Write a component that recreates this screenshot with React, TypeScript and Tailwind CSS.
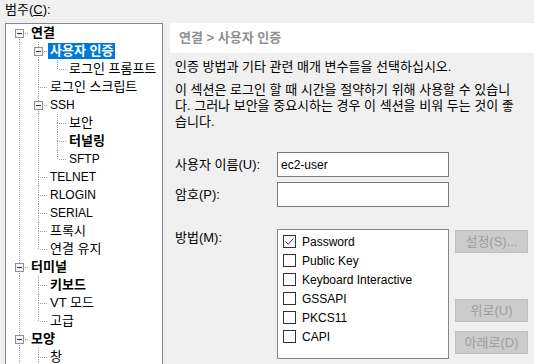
type TreeNode = { label: string; bold?: boolean; selected?: boolean; children?: TreeNode[] };

type Row = { node: TreeNode; level: number; trail: boolean[]; hasNext: boolean; first: boolean };

const tree: TreeNode[] = [
  {
    label: "연결",
    bold: true,
    children: [
      { label: "사용자 인증", bold: true, selected: true, children: [{ label: "로그인 프롬프트" }] },
      { label: "로그인 스크립트" },
      { label: "SSH", children: [{ label: "보안" }, { label: "터널링", bold: true }, { label: "SFTP" }] },
      { label: "TELNET" },
      { label: "RLOGIN" },
      { label: "SERIAL" },
      { label: "프록시" },
      { label: "연결 유지" },
    ],
  },
  { label: "터미널", bold: true, children: [{ label: "키보드", bold: true }, { label: "VT 모드" }, { label: "고급" }] },
  { label: "모양", bold: true, children: [{ label: "창" }, { label: "강조" }] },
  { label: "고급", bold: true },
];

const methods = [
  { label: "Password", checked: true },
  { label: "Public Key" },
  { label: "Keyboard Interactive" },
  { label: "GSSAPI" },
  { label: "PKCS11" },
  { label: "CAPI" },
];

function flatten(nodes: TreeNode[], level: number, trail: boolean[], out: Row[]) {
  nodes.forEach((node, i) => {
    const hasNext = i < nodes.length - 1;
    out.push({ node, level, trail, hasNext, first: level === 0 && i === 0 });
    if (node.children) flatten(node.children, level + 1, [...trail, hasNext], out);
  });
  return out;
}

const dots = { stroke: "#a0a0a0", strokeDasharray: "1 1", strokeWidth: 1 };

function Gutter({ row }: { row: Row }) {
  const w = 19 * (row.level + 1);
  const cx = 19 * row.level + 9.5;
  return (
    <svg width={w} height={18} className="shrink-0" shapeRendering="crispEdges">
      {row.trail.map((on, i) =>
        on ? <line key={i} x1={19 * i + 9.5} y1={0} x2={19 * i + 9.5} y2={18} {...dots} /> : null
      )}
      {!row.first && <line x1={cx} y1={0} x2={cx} y2={9} {...dots} />}
      {row.hasNext && <line x1={cx} y1={9} x2={cx} y2={18} {...dots} />}
      <line x1={cx + 1} y1={9.5} x2={w} y2={9.5} {...dots} />
      {row.node.children && (
        <g>
          <rect x={cx - 4} y={5.5} width={8} height={8} fill="#f4f4f4" stroke="#919191" />
          <line x1={cx - 2.5} y1={9.5} x2={cx + 2.5} y2={9.5} stroke="#1f3b63" />
        </g>
      )}
    </svg>
  );
}

// latin-only labels read smaller than the hangul ones
const isLatin = (s: string) => /^[\x00-\x7f]+$/.test(s);

function CategoryTree() {
  const rows = flatten(tree, 0, [], []);
  return (
    <div className="h-[400px] shrink-0 border border-[#828790] bg-white pl-[4px]">
      {rows.map((row, i) => (
        <div key={i} className="flex h-[18px] items-center">
          <Gutter row={row} />
          <span
            className={`h-[16px] whitespace-nowrap px-[2px] leading-[16px] ${isLatin(row.node.label) ? "text-[12px]" : ""} ${
              row.node.bold ? "font-bold" : ""
            } ${row.node.selected ? "bg-[#0078d7] text-white" : "text-black"}`}
          >
            {row.node.label}
          </span>
        </div>
      ))}
    </div>
  );
}

function Checkbox({ checked }: { checked?: boolean }) {
  return (
    <span className="flex h-[13px] w-[13px] shrink-0 items-center justify-center border border-[#333333] bg-white">
      {checked && (
        <svg width="11" height="11" viewBox="0 0 11 11">
          <path d="M1.5 5.5 L4.2 8.3 L9.5 2.5" fill="none" stroke="#333333" strokeWidth="1" />
        </svg>
      )}
    </span>
  );
}

function DisabledButton({ children }: { children: string }) {
  return (
    <div className="flex h-[23px] w-[73px] items-center justify-center border border-[#bfbfbf] bg-[#cccccc] text-[#9d9d9d]">
      {children}
    </div>
  );
}

export default function App() {
  return (
    <div className="flex h-[364px] w-[534px] overflow-hidden bg-[#f0f0f0] pl-[5px] font-['Liberation_Sans','Noto_Sans_CJK_KR',sans-serif] text-[13px] leading-[16px] text-black">
      <div className="flex w-[158px] shrink-0 flex-col">
        <div className="h-[23px] shrink-0 pt-[2px]">
          범주(<span className="underline">C</span>):
        </div>
        <CategoryTree />
      </div>

      <div className="ml-[7px] mt-[23px] flex min-w-0 flex-1 flex-col">
        <div className="flex h-[30px] shrink-0 items-center bg-white pl-[9px] font-bold text-[#8f8f8f]">
          연결 &gt; 사용자 인증
        </div>

        <div className="pl-[5px]">
          <p className="mt-[6px] whitespace-nowrap">인증 방법과 기타 관련 매개 변수들을 선택하십시오.</p>
          <p className="mt-[7px] whitespace-nowrap">
            이 섹션은 로그인 할 때 시간을 절약하기 위해 사용할 수 있습니
            <br />
            다. 그러나 보안을 중요시하는 경우 이 섹션을 비워 두는 것이 좋
            <br />
            습니다.
          </p>

          <div className="mt-[22px] flex items-center">
            <div className="w-[102px]">사용자 이름(U):</div>
            <div className="flex h-[25px] w-[172px] items-center border border-[#7a7a7a] bg-white pl-[3px] text-[12px]">
              ec2-user
            </div>
          </div>
          <div className="mt-[5px] flex items-center">
            <div className="w-[102px]">암호(P):</div>
            <div className="h-[25px] w-[172px] border border-[#7a7a7a] bg-white" />
          </div>

          <div className="mt-[22px] flex">
            <div className="w-[102px] pt-[1px]">방법(M):</div>
            <div className="h-[130px] w-[172px] border border-[#828790] bg-white pt-[2px] text-[12px]">
              {methods.map((m) => (
                <div key={m.label} className="flex h-[19px] items-center pl-[5px]">
                  <Checkbox checked={m.checked} />
                  <span className="ml-[6px] whitespace-nowrap">{m.label}</span>
                </div>
              ))}
            </div>
            <div className="ml-[6px] flex flex-col pt-[1px]">
              <DisabledButton>설정(S)...</DisabledButton>
              <div className="mt-[46px]">
                <DisabledButton>위로(U)</DisabledButton>
              </div>
              <div className="mt-[9px]">
                <DisabledButton>아래로(D)</DisabledButton>
              </div>
            </div>
          </div>
        </div>
      </div>
    </div>
  );
}
